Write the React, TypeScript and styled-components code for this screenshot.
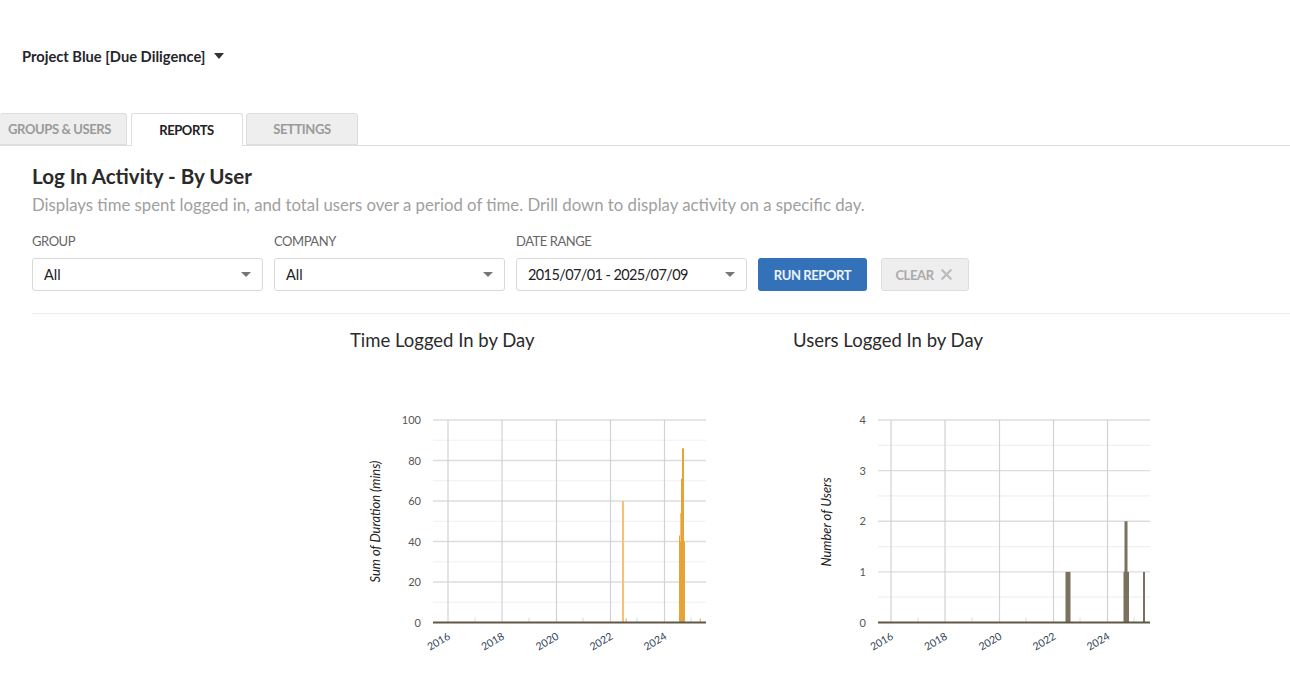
import React from "react";
import styled, { createGlobalStyle } from "styled-components";
import { X } from "lucide-react";

const GlobalStyle = createGlobalStyle`
  html, body {
    margin: 0;
    padding: 0;
    background: #fff;
    overflow: hidden;
  }
  body {
    font-family: "Lato", "Noto Sans", sans-serif;
    color: #222;
  }
`;

interface Bar {
  x: number;
  width: number;
  value: number;
  light?: boolean;
}

interface ChartProps {
  title: string;
  axisLabel: string;
  axisLabelY: number;
  axisLabelX: number;
  plotLeft: number;
  plotRight: number;
  max: number;
  step: number;
  color: string;
  lightColor: string;
  bars: Bar[];
  ticks: number[];
}

const PLOT_TOP = 15;
const PLOT_BOTTOM = 217.5;
const YEARS = [
  { label: "2016", x: 98 },
  { label: "2018", x: 152 },
  { label: "2020", x: 206.5 },
  { label: "2022", x: 260.5 },
  { label: "2024", x: 314.5 },
];

const Chart = ({
  title,
  axisLabel,
  axisLabelX,
  axisLabelY,
  plotLeft,
  plotRight,
  max,
  step,
  color,
  lightColor,
  bars,
  ticks,
}: ChartProps) => {
  const scale = (v: number) =>
    PLOT_BOTTOM - (v / max) * (PLOT_BOTTOM - PLOT_TOP);
  const majors: number[] = [];
  for (let v = 0; v <= max; v += step) majors.push(v);

  return (
    <ChartCard>
      <ChartTitle>{title}</ChartTitle>
      <ChartSvg width={444} height={270} viewBox="0 0 444 270">
        {majors.slice(0, -1).map((v) => (
          <line
            key={`minor-${v}`}
            x1={plotLeft}
            x2={plotRight}
            y1={scale(v + step / 2)}
            y2={scale(v + step / 2)}
            stroke="#f0eff2"
            strokeWidth={1.2}
          />
        ))}
        {majors.slice(1).map((v) => (
          <line
            key={`major-${v}`}
            x1={plotLeft}
            x2={plotRight}
            y1={scale(v)}
            y2={scale(v)}
            stroke="#dddcdf"
            strokeWidth={1.3}
          />
        ))}
        {YEARS.map((y) => (
          <line
            key={y.label}
            x1={y.x}
            x2={y.x}
            y1={PLOT_TOP}
            y2={PLOT_BOTTOM}
            stroke="#d2d1d6"
            strokeWidth={1.2}
          />
        ))}
        {ticks.map((t) => (
          <line
            key={t}
            x1={t}
            x2={t}
            y1={PLOT_BOTTOM - 5}
            y2={PLOT_BOTTOM}
            stroke="#dcdbde"
            strokeWidth={1}
          />
        ))}
        {bars.map((b) => (
          <rect
            key={`${b.x}-${b.value}`}
            x={b.x}
            y={scale(b.value)}
            width={b.width}
            height={PLOT_BOTTOM - scale(b.value)}
            fill={b.light ? lightColor : color}
          />
        ))}
        <line
          x1={plotLeft}
          x2={plotRight}
          y1={PLOT_BOTTOM}
          y2={PLOT_BOTTOM}
          stroke="#5f5847"
          strokeWidth={1.8}
        />
        {majors.map((v) => (
          <YTick key={v} x={plotLeft - 12} y={scale(v) + 4} textAnchor="end">
            {v}
          </YTick>
        ))}
        {YEARS.map((y) => (
          <XTick
            key={y.label}
            textAnchor="end"
            transform={`translate(${y.x + 3} 233.5) rotate(-30)`}
          >
            {y.label}
          </XTick>
        ))}
        <AxisTitle
          textAnchor="middle"
          transform={`translate(${axisLabelX} ${axisLabelY}) rotate(-90)`}
        >
          {axisLabel}
        </AxisTitle>
      </ChartSvg>
    </ChartCard>
  );
};

const Field = ({
  label,
  value,
  numeric,
}: {
  label: string;
  value: string;
  numeric?: boolean;
}) => (
  <FieldWrap>
    <FieldLabel>{label}</FieldLabel>
    <SelectBox $numeric={numeric}>
      {value}
      <SelectCaret />
    </SelectBox>
  </FieldWrap>
);

export default function App() {
  return (
    <Page>
      <GlobalStyle />
      <ProjectBar>
        <ProjectName>Project Blue [Due Diligence]</ProjectName>
        <ProjectCaret />
      </ProjectBar>

      <Tabs>
        <Tab $width={127} $flushLeft>
          GROUPS &amp; USERS
        </Tab>
        <Tab $width={112} $active>
          REPORTS
        </Tab>
        <Tab $width={112}>SETTINGS</Tab>
      </Tabs>

      <Content>
        <Heading>Log In Activity - By User</Heading>
        <Description>
          Displays time spent logged in, and total users over a period of time.
          Drill down to display activity on a specific day.
        </Description>

        <Filters>
          <Field label="GROUP" value="All" />
          <Field label="COMPANY" value="All" />
          <Field label="DATE RANGE" value="2015/07/01 - 2025/07/09" numeric />
          <RunButton>RUN REPORT</RunButton>
          <ClearButton>
            <ClearLabel>CLEAR</ClearLabel>
            <ClearIcon size={17} strokeWidth={3.2} />
          </ClearButton>
        </Filters>

        <Divider />

        <Charts>
          <Chart
            title="Time Logged In by Day"
            axisLabel="Sum of Duration (mins)"
            axisLabelX={30}
            axisLabelY={116.5}
            plotLeft={83}
            plotRight={356}
            max={100}
            step={20}
            color="#e8a336"
            lightColor="#f6c078"
            ticks={[125, 179, 233, 287, 341]}
            bars={[
              { x: 272, width: 2, value: 60, light: true },
              { x: 275.5, width: 1.5, value: 2, light: true },
              { x: 349.5, width: 1.5, value: 2, light: true },
              { x: 329, width: 2, value: 43 },
              { x: 330, width: 2, value: 54, light: true },
              { x: 332, width: 2, value: 86 },
              { x: 331, width: 3, value: 71 },
              { x: 330, width: 5, value: 40 },
            ]}
          />
          <Chart
            title="Users Logged In by Day"
            axisLabel="Number of Users"
            axisLabelX={38}
            axisLabelY={117}
            plotLeft={85}
            plotRight={357}
            max={4}
            step={1}
            color="#7b715f"
            lightColor="#7b715f"
            ticks={[125, 179, 233, 287, 341]}
            bars={[
              { x: 272.5, width: 5, value: 1 },
              { x: 330.5, width: 5.5, value: 1 },
              { x: 331.5, width: 3, value: 2 },
              { x: 350, width: 2, value: 1 },
            ]}
          />
        </Charts>
      </Content>
    </Page>
  );
}

const Page = styled.div`
  width: 1290px;
  height: 680px;
  overflow: hidden;
`;

const ProjectBar = styled.div`
  display: flex;
  align-items: center;
  gap: 9px;
  height: 112px;
  padding: 0 0 1px 22px;
  box-sizing: border-box;
`;

const ProjectName = styled.span`
  font-size: 14.7px;
  font-weight: 700;
  color: #26262b;
`;

const ProjectCaret = styled.span`
  width: 0;
  height: 0;
  border-left: 5px solid transparent;
  border-right: 5px solid transparent;
  border-top: 6px solid #333;
`;

const Tabs = styled.div`
  display: flex;
  align-items: flex-end;
  gap: 3.5px;
  height: 33px;
  border-bottom: 1px solid #ddd;
`;

const Tab = styled.div<{ $width: number; $active?: boolean; $flushLeft?: boolean }>`
  box-sizing: border-box;
  width: ${(p) => p.$width}px;
  height: ${(p) => (p.$active ? 33 : 32)}px;
  margin-bottom: ${(p) => (p.$active ? -1 : 0)}px;
  padding: 0 ${(p) => (p.$flushLeft ? 7 : 0)}px 1px 0;
  display: flex;
  align-items: center;
  justify-content: center;
  font-size: 13px;
  letter-spacing: -0.4px;
  font-weight: 700;
  color: ${(p) => (p.$active ? "#222" : "#9a9a9a")};
  background: ${(p) => (p.$active ? "#fff" : "#eee")};
  border: 1px solid #ddd;
  border-left-width: ${(p) => (p.$flushLeft ? 0 : 1)}px;
  border-bottom: ${(p) => (p.$active ? "none" : "1px solid #ddd")};
  border-radius: 3px 3px 0 0;
`;

const Content = styled.div`
  padding: 17px 0 0 32px;
`;

const Heading = styled.h1`
  margin: 0;
  font-size: 20.6px;
  line-height: 26px;
  font-weight: 700;
  color: #2a2a2a;
`;

const Description = styled.p`
  margin: 4px 0 0;
  font-size: 16.75px;
  line-height: 24px;
  color: #a0a0a0;
`;

const Filters = styled.div`
  display: flex;
  align-items: flex-end;
  gap: 11px;
  margin-top: 16px;
`;

const FieldWrap = styled.div`
  width: 231px;
`;

const FieldLabel = styled.div`
  font-size: 13px;
  letter-spacing: -0.45px;
  line-height: 16px;
  margin-bottom: 9px;
  color: #666;
`;

const SelectBox = styled.div<{ $numeric?: boolean }>`
  position: relative;
  box-sizing: border-box;
  height: 33px;
  display: flex;
  align-items: center;
  padding-left: 11px;
  font-size: 14.5px;
  letter-spacing: ${(p) => (p.$numeric ? "-0.6px" : "0")};
  color: #222;
  background: #fff;
  border: 1px solid #d9d9d9;
  border-radius: 3px;
`;

const SelectCaret = styled.span`
  position: absolute;
  right: 11px;
  top: 13px;
  width: 0;
  height: 0;
  border-left: 5px solid transparent;
  border-right: 5px solid transparent;
  border-top: 5px solid #777;
`;

const RunButton = styled.button`
  box-sizing: border-box;
  width: 109px;
  height: 33px;
  padding: 0;
  font: 700 13px "Lato", "Noto Sans", sans-serif;
  letter-spacing: -0.4px;
  color: #eef3f9;
  background: #3372b9;
  border: none;
  border-radius: 3px;
`;

const ClearButton = styled.button`
  box-sizing: border-box;
  width: 88px;
  height: 33px;
  margin-left: 3px;
  padding: 0;
  display: flex;
  align-items: center;
  justify-content: center;
  gap: 4px;
  background: #eee;
  border: 1px solid #ddd;
  border-radius: 3px;
`;

const ClearLabel = styled.span`
  font: 700 13px/16px "Lato", "Noto Sans", sans-serif;
  letter-spacing: -0.4px;
  color: #aaa;
`;

const ClearIcon = styled(X)`
  color: #bbb;
`;

const Divider = styled.div`
  height: 1px;
  margin-top: 22px;
  background: #ececec;
`;

const Charts = styled.div`
  display: flex;
  padding-left: 318px;
`;

const ChartCard = styled.div`
  width: 443px;
  flex: none;
`;

const ChartTitle = styled.div`
  margin-top: 14px;
  font-size: 18.5px;
  line-height: 24px;
  color: #2b2b2b;
`;

const ChartSvg = styled.svg`
  display: block;
  margin-top: 53px;
  overflow: visible;
`;

const YTick = styled.text`
  font-size: 11px;
  fill: #555;
`;

const XTick = styled.text`
  font-size: 10.5px;
  fill: #2f4358;
`;

const AxisTitle = styled.text`
  font-size: 12.9px;
  font-style: italic;
  fill: #222;
`;
